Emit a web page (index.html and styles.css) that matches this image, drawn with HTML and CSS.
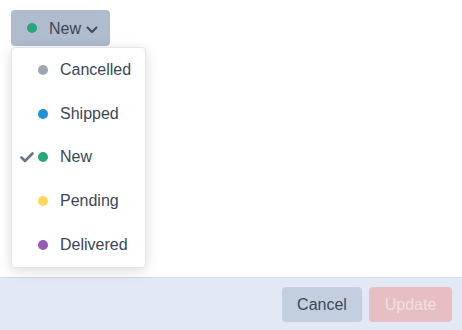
FILE: index.html
```html
<!DOCTYPE html>
<html>
<head>
<meta charset="utf-8">
<link rel="stylesheet" href="styles.css">
</head>
<body>
<div class="page">
  <main class="main">
    <div class="picker">
      <button class="trigger">
        <span class="dot green"></span>
        <span class="label">New</span>
        <svg class="chev" width="12" height="8" viewBox="0 0 12 8"><path d="M1.5 1.5 L6 6 L10.5 1.5" fill="none" stroke="#3d4a5c" stroke-width="2" stroke-linecap="round" stroke-linejoin="round"/></svg>
      </button>
      <ul class="menu">
        <li class="item"><span class="check"></span><span class="dot gray"></span><span>Cancelled</span></li>
        <li class="item"><span class="check"></span><span class="dot blue"></span><span>Shipped</span></li>
        <li class="item"><span class="check"><svg width="14" height="11" viewBox="0 0 14 11"><path d="M1.5 5.5 L5 9 L12.5 1.5" fill="none" stroke="#6b7585" stroke-width="2.6" stroke-linecap="round" stroke-linejoin="round"/></svg></span><span class="dot green"></span><span>New</span></li>
        <li class="item"><span class="check"></span><span class="dot yellow"></span><span>Pending</span></li>
        <li class="item"><span class="check"></span><span class="dot purple"></span><span>Delivered</span></li>
      </ul>
    </div>
  </main>
  <footer class="footer">
    <button class="btn cancel">Cancel</button>
    <button class="btn update">Update</button>
  </footer>
</div>
</body>
</html>
```
FILE: styles.css
```css
* { box-sizing: border-box; }
html, body { margin: 0; padding: 0; }
body {
  font-family: "Liberation Sans", Arial, sans-serif;
  font-size: 16px;
  color: #3b4758;
  background: #fff;
}
.page {
  display: flex;
  flex-direction: column;
  height: 330px;
}
.main {
  flex: 1;
  padding: 10px 11px;
}
.picker { position: relative; display: inline-block; }
.trigger {
  display: flex;
  align-items: center;
  height: 36px;
  width: 99px;
  padding: 0 0 0 16px;
  background: #afbccd;
  border: none;
  border-radius: 4px;
  font: inherit;
  color: #3b4758;
}
.trigger .label { margin-left: 12px; padding-top: 2px; }
.trigger .chev { margin-left: 5px; margin-top: 3px; }
.dot {
  display: inline-block;
  width: 10px;
  height: 10px;
  border-radius: 50%;
  flex: none;
}
.green { background: #26a67b; }
.gray { background: #9ea6b3; }
.blue { background: #2191da; }
.yellow { background: #fdd85b; }
.purple { background: #9b59b6; }
.menu {
  position: absolute;
  top: 37px;
  left: 0;
  width: 135px;
  height: 221px;
  margin: 0;
  padding: 0;
  list-style: none;
  background: #fff;
  border: 1px solid #e2e5ea;
  border-radius: 4px;
  box-shadow: 0 3px 14px rgba(0,0,0,0.14);
  display: flex;
  flex-direction: column;
  justify-content: center;
}
.item {
  display: flex;
  align-items: center;
  height: 44px;
}
.check {
  width: 18px;
  margin-left: 8px;
  display: flex;
  align-items: center;
}
.item .dot { margin-right: 12px; }
.footer {
  height: 53px;
  background: #e2e9f4;
  border-top: 1px solid #d3dbe6;
  display: flex;
  justify-content: flex-end;
  align-items: center;
  gap: 7px;
  padding: 0 10px 0 0;
}
.btn {
  height: 35px;
  border: none;
  border-radius: 4px;
  font: inherit;
  padding: 2px 0 0 0;
}
.cancel { width: 80px; background: #c3cfde; color: #3b4758; }
.update { width: 83px; background: #e8bec5; color: #f5dfe3; }
```
